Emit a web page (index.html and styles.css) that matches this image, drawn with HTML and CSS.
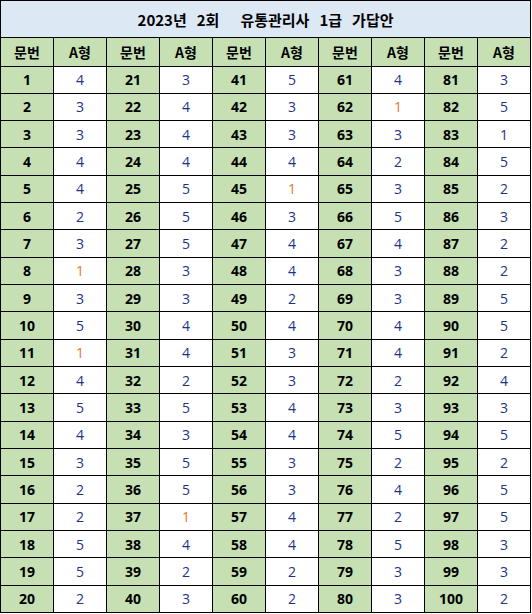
FILE: index.html
```html
<!DOCTYPE html>
<html lang="ko">
<head>
<meta charset="utf-8">
<link rel="stylesheet" href="styles.css">
</head>
<body>
<table class="sheet">
<colgroup>
<col class="c"><col class="c"><col class="c"><col class="c"><col class="c"><col class="c"><col class="c"><col class="c"><col class="c"><col class="c">
</colgroup>
<thead>
<tr class="title-row"><th colspan="10" class="title"><span class="w">2023년</span><span class="w wide">2회</span><span class="w">유통관리사</span><span class="w">1급</span><span class="w last">가답안</span></th></tr>
<tr class="head-row"><th>문번</th><th>A형</th><th>문번</th><th>A형</th><th>문번</th><th>A형</th><th>문번</th><th>A형</th><th>문번</th><th>A형</th></tr>
</thead>
<tbody id="body"></tbody>
</table>
<script>
var ans=[
[4,3,3,4,4,2,3,1,3,5,1,4,5,4,3,2,2,5,5,2],
[3,4,4,4,5,5,5,3,3,4,4,2,5,3,5,5,1,4,2,3],
[5,3,3,4,1,3,4,4,2,4,3,3,4,4,3,3,4,4,2,2],
[4,1,3,2,3,5,4,3,3,4,4,2,3,5,2,4,2,5,3,3],
[3,5,1,5,2,3,2,2,5,5,2,4,3,5,2,5,5,3,3,2]];
var tb=document.getElementById('body');
for(var i=0;i<20;i++){
  var tr=document.createElement('tr');tr.className='row';
  for(var c=0;c<5;c++){
    var n=document.createElement('td');n.className='num';n.textContent=(c*20+i+1);
    var a=document.createElement('td');
    a.className='ans'+(ans[c][i]===1&&c<4?' one':'');
    a.textContent=ans[c][i];
    tr.appendChild(n);tr.appendChild(a);
  }
  tb.appendChild(tr);
}
</script>
</body>
</html>
```
FILE: styles.css
```css
html, body {
  margin: 0;
  padding: 0;
  background: #ffffff;
}
.sheet {
  border-collapse: collapse;
  table-layout: fixed;
  width: 531px;
  font-family: "Open Sans", "Noto Sans CJK KR", sans-serif;
}
.c { width: 53px; }
.sheet th, .sheet td {
  border: 1px solid #000;
  padding: 0;
  text-align: center;
  vertical-align: middle;
  overflow: hidden;
}
.title-row { height: 37px; }
.title {
  background: #dde8f5;
  font-family: "Noto Sans CJK KR", sans-serif;
  font-weight: 700;
  font-size: 15px;
  white-space: nowrap;
  color: #000;
}
.w { margin-right: 10px; }
.w.wide { margin-right: 21px; }
.w.last { margin-right: 0; }
.head-row { height: 28.5px; }
.head-row th {
  background: #c6e0b4;
  font-family: "Noto Sans CJK KR", sans-serif;
  font-weight: 700;
  font-size: 14px;
  color: #000;
}
.row { height: 27.33px; }
.num {
  background: #c6e0b4;
  font-weight: 700;
  font-size: 14px;
  color: #000;
}
.ans {
  background: #fff;
  font-weight: 400;
  font-size: 14px;
  color: #1c3486;
}
.ans.one { color: #e8771e; }
```
